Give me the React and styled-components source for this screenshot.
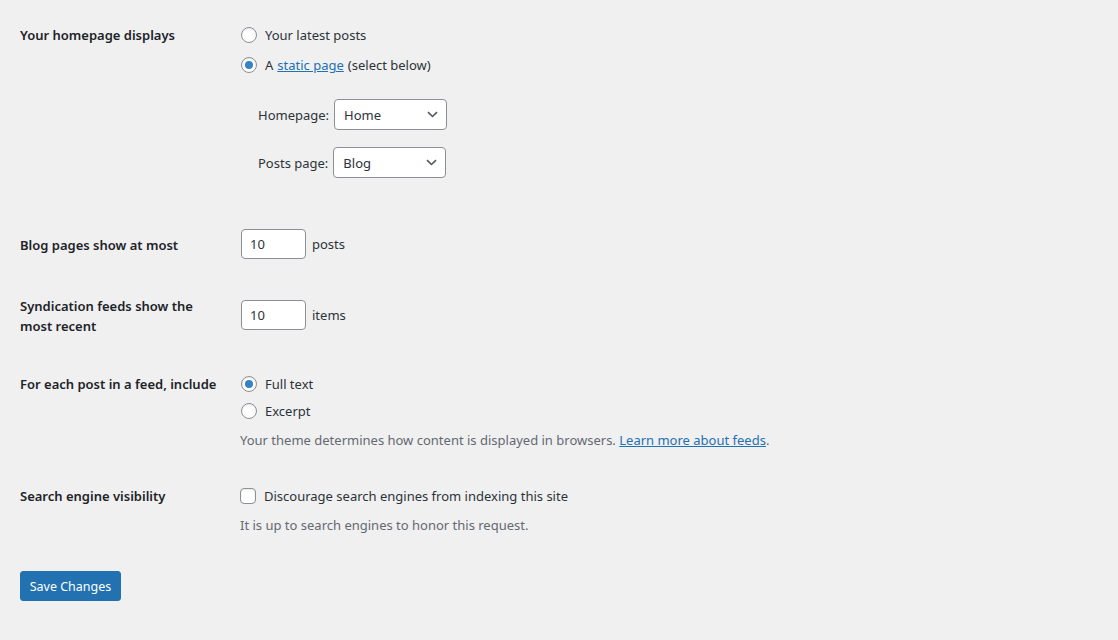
import React from 'react';
import styled, { createGlobalStyle } from 'styled-components';

const GlobalStyle = createGlobalStyle`
  html, body {
    margin: 0;
    padding: 0;
    background: #f0f0f1;
  }
  body {
    font-family: "Noto Sans", "Open Sans", sans-serif;
    font-size: 13px;
    color: #2c3338;
  }
`;

const Page = styled.div`
  padding: 0 20px;
  min-height: 640px;
  box-sizing: border-box;
`;

const Row = styled.div`
  display: grid;
  grid-template-columns: 220px 1fr;
  align-items: start;
  margin-top: ${props => props.$top || 0}px;
`;

const Th = styled.div`
  font-weight: 600;
  font-size: 13px;
  line-height: 20px;
  color: #1d2327;
  padding-top: ${props => props.$pad || 0}px;
  padding-right: 10px;
`;

const Td = styled.div`
  padding-top: ${props => props.$pad || 0}px;
  display: flex;
  flex-direction: column;
`;

const Option = styled.label`
  display: flex;
  align-items: center;
  height: ${props => props.$h || 27}px;
  line-height: 20px;
`;

const Radio = styled.span`
  box-sizing: border-box;
  width: 16px;
  height: 16px;
  margin: 0 8px 0 1px;
  border-radius: 50%;
  border: 1px solid #8c8f94;
  background: #fff;
  display: flex;
  align-items: center;
  justify-content: center;
  box-shadow: inset 0 1px 2px rgba(0, 0, 0, 0.1);
  &::after {
    content: '';
    width: 8px;
    height: 8px;
    border-radius: 50%;
    background: ${props => (props.$checked ? '#3582c4' : 'transparent')};
  }
`;

const Checkbox = styled.span`
  box-sizing: border-box;
  width: 16px;
  height: 16px;
  margin-right: 8px;
  border-radius: 4px;
  border: 1px solid #8c8f94;
  background: #fff;
  box-shadow: inset 0 1px 2px rgba(0, 0, 0, 0.1);
`;

const Link = styled.a`
  color: #2271b1;
  text-decoration: underline;
  margin: 0 4px;
`;

const SelectRow = styled.div`
  display: flex;
  align-items: center;
  padding-left: 18px;
  margin-top: ${props => props.$top || 0}px;
  line-height: 20px;
`;

const SelectBox = styled.div`
  box-sizing: border-box;
  width: 113px;
  height: 31px;
  margin-left: 5px;
  padding: 0 8px 0 9px;
  border: 1px solid #8c8f94;
  border-radius: 4px;
  background: #fff;
  display: flex;
  align-items: center;
  justify-content: space-between;
  font-size: 13px;
  color: #2c3338;
`;

const Field = styled.div`
  display: flex;
  align-items: center;
  margin-top: ${props => props.$top || 0}px;
  line-height: 20px;
`;

const NumberInput = styled.input`
  box-sizing: border-box;
  width: 65px;
  height: 30px;
  margin: 0 6px 0 1px;
  padding: 0 8px;
  border: 1px solid #8c8f94;
  border-radius: 4px;
  background: #fff;
  font-family: inherit;
  font-size: 13px;
  color: #2c3338;
`;

const Description = styled.p`
  margin: ${props => props.$top || 6}px 0 0;
  line-height: 20px;
  color: #646970;
  a {
    color: #2271b1;
  }
`;

const Button = styled.button`
  box-sizing: border-box;
  display: block;
  margin-top: 36px;
  height: 30px;
  width: 101px;
  padding: 0;
  white-space: nowrap;
  border: 1px solid #2271b1;
  border-radius: 3px;
  background: #2271b1;
  color: #fff;
  font-family: inherit;
  font-size: 12.5px;
`;

const Chevron = () => (
  <svg width="11" height="7" viewBox="0 0 11 7">
    <path d="M1 1.2l4.5 4.3L10 1.2" fill="none" stroke="#50575e" strokeWidth="1.6" />
  </svg>
);

const App = () => (
  <Page>
    <GlobalStyle />
    <Row>
      <Th $pad={25}>Your homepage displays</Th>
      <Td $pad={20}>
        <Option $h={30}>
          <Radio />
          Your latest posts
        </Option>
        <Option $h={30}>
          <Radio $checked />
          A<Link href="#">static page</Link>(select below)
        </Option>
        <SelectRow $top={19}>
          Homepage:
          <SelectBox>
            Home
            <Chevron />
          </SelectBox>
        </SelectRow>
        <SelectRow $top={17}>
          Posts page:
          <SelectBox>
            Blog
            <Chevron />
          </SelectBox>
        </SelectRow>
      </Td>
    </Row>

    <Row $top={51}>
      <Th $pad={6}>Blog pages show at most</Th>
      <Td>
        <Field>
          <NumberInput defaultValue="10" />
          posts
        </Field>
      </Td>
    </Row>

    <Row $top={37}>
      <Th>
        Syndication feeds show the
        <br />
        most recent
      </Th>
      <Td>
        <Field $top={4}>
          <NumberInput defaultValue="10" />
          items
        </Field>
      </Td>
    </Row>

    <Row $top={34}>
      <Th $pad={4}>For each post in a feed, include</Th>
      <Td>
        <Option>
          <Radio $checked />
          Full text
        </Option>
        <Option>
          <Radio />
          Excerpt
        </Option>
        <Description>
          Your theme determines how content is displayed in browsers.{' '}
          <a href="#">Learn more about feeds</a>.
        </Description>
      </Td>
    </Row>

    <Row $top={32}>
      <Th $pad={4}>Search engine visibility</Th>
      <Td>
        <Option>
          <Checkbox />
          Discourage search engines from indexing this site
        </Option>
        <Description>It is up to search engines to honor this request.</Description>
      </Td>
    </Row>

    <Button>Save Changes</Button>
  </Page>
);

export default App;
